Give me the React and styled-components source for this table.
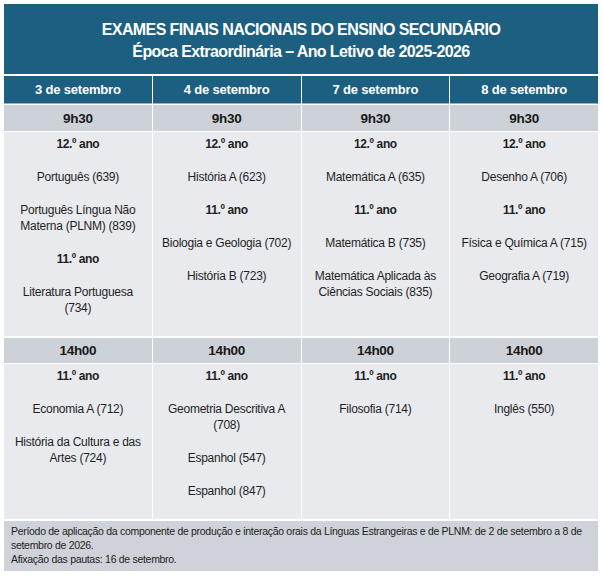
import React from "react";
import styled, { createGlobalStyle } from "styled-components";

const GlobalStyle = createGlobalStyle`
  body {
    margin: 0;
    background: #ffffff;
    font-family: "Liberation Sans", Arial, sans-serif;
  }
`;

const Page = styled.div`
  padding: 4px 5px 8px 4px;
`;

const Title = styled.div`
  background-color: #1c5f80;
  color: #ffffff;
  height: 70px;
  box-sizing: border-box;
  padding-top: 4px;
  display: flex;
  flex-direction: column;
  justify-content: center;
  align-items: center;
  font-size: 16px;
  letter-spacing: -0.6px;
  font-weight: bold;
  line-height: 22.5px;
  margin-bottom: 2px;
`;

const Grid = styled.div`
  display: grid;
  grid-template-columns: repeat(4, 1fr);
  column-gap: 1px;
  row-gap: 1px;
`;

const DayCell = styled.div`
  background-color: #1c5f80;
  color: #ffffff;
  height: 27px;
  display: flex;
  align-items: center;
  justify-content: center;
  font-size: 13px;
  letter-spacing: -0.2px;
  font-weight: bold;
  border-bottom: 1px solid #8fb0c3;
`;

const TimeCell = styled.div`
  background-color: #cdd1d8;
  color: #1a1a1a;
  height: ${(p) => (p.first ? "26px" : "25px")};
  margin-top: ${(p) => (p.first ? "0" : "1px")};
  display: flex;
  align-items: center;
  justify-content: center;
  font-size: 13.5px;
  letter-spacing: -0.3px;
  font-weight: bold;
`;

const Cell = styled.div`
  background-color: #e8eaee;
  padding: 4px 4px 3px;
  text-align: center;
  color: #1f1f1f;
`;

const Item = styled.p`
  margin: 0 0 17px;
  font-size: 12px;
  letter-spacing: ${(p) => (p.year ? "-0.35px" : "-0.25px")};
  font-weight: ${(p) => (p.year ? "bold" : "normal")};
  line-height: 16px;
`;

const Footer = styled.div`
  margin-top: 2px;
  background-color: #cfd3d9;
  color: #222222;
  padding: 3px 7px 5px;
  font-size: 10.5px;
  letter-spacing: -0.3px;
  line-height: 14px;
`;

const days = ["3 de setembro", "4 de setembro", "7 de setembro", "8 de setembro"];

const morning = [
  [
    { year: true, text: "12.º ano" },
    { text: "Português (639)" },
    { text: ["Português Língua Não", "Materna (PLNM) (839)"] },
    { year: true, text: "11.º ano" },
    { text: ["Literatura Portuguesa", "(734)"] },
  ],
  [
    { year: true, text: "12.º ano" },
    { text: "História A (623)" },
    { year: true, text: "11.º ano" },
    { text: "Biologia e Geologia (702)" },
    { text: "História B (723)" },
  ],
  [
    { year: true, text: "12.º ano" },
    { text: "Matemática A (635)" },
    { year: true, text: "11.º ano" },
    { text: "Matemática B (735)" },
    { text: ["Matemática Aplicada às", "Ciências Sociais (835)"] },
  ],
  [
    { year: true, text: "12.º ano" },
    { text: "Desenho A (706)" },
    { year: true, text: "11.º ano" },
    { text: "Física e Química A (715)" },
    { text: "Geografia A (719)" },
  ],
];

const afternoon = [
  [
    { year: true, text: "11.º ano" },
    { text: "Economia A (712)" },
    { text: ["História da Cultura e das", "Artes (724)"] },
  ],
  [
    { year: true, text: "11.º ano" },
    { text: ["Geometria Descritiva A", "(708)"] },
    { text: "Espanhol (547)" },
    { text: "Espanhol (847)" },
  ],
  [
    { year: true, text: "11.º ano" },
    { text: "Filosofia (714)" },
  ],
  [
    { year: true, text: "11.º ano" },
    { text: "Inglês (550)" },
  ],
];

const renderText = (text) =>
  Array.isArray(text)
    ? text.map((line, i) => (
        <React.Fragment key={i}>
          {i > 0 && <br />}
          {line}
        </React.Fragment>
      ))
    : text;

const Session = ({ time, columns, first }) => (
  <>
    {columns.map((_, i) => (
      <TimeCell key={"t" + i} first={first}>
        {time}
      </TimeCell>
    ))}
    {columns.map((items, i) => (
      <Cell key={"c" + i}>
        {items.map((item, j) => (
          <Item key={j} year={item.year}>
            {renderText(item.text)}
          </Item>
        ))}
      </Cell>
    ))}
  </>
);

const App = () => {
  return (
    <>
      <GlobalStyle />
      <Page>
        <Title>
          <div>EXAMES FINAIS NACIONAIS DO ENSINO SECUNDÁRIO</div>
          <div>Época Extraordinária – Ano Letivo de 2025-2026</div>
        </Title>
        <Grid>
          {days.map((d) => (
            <DayCell key={d}>{d}</DayCell>
          ))}
          <Session time="9h30" columns={morning} first />
          <Session time="14h00" columns={afternoon} />
        </Grid>
        <Footer>
          Período de aplicação da componente de produção e interação orais da Línguas Estrangeiras e de PLNM: de 2 de setembro a 8 de setembro de 2026.
          <br />
          Afixação das pautas: 16 de setembro.
        </Footer>
      </Page>
    </>
  );
};

export default App;
